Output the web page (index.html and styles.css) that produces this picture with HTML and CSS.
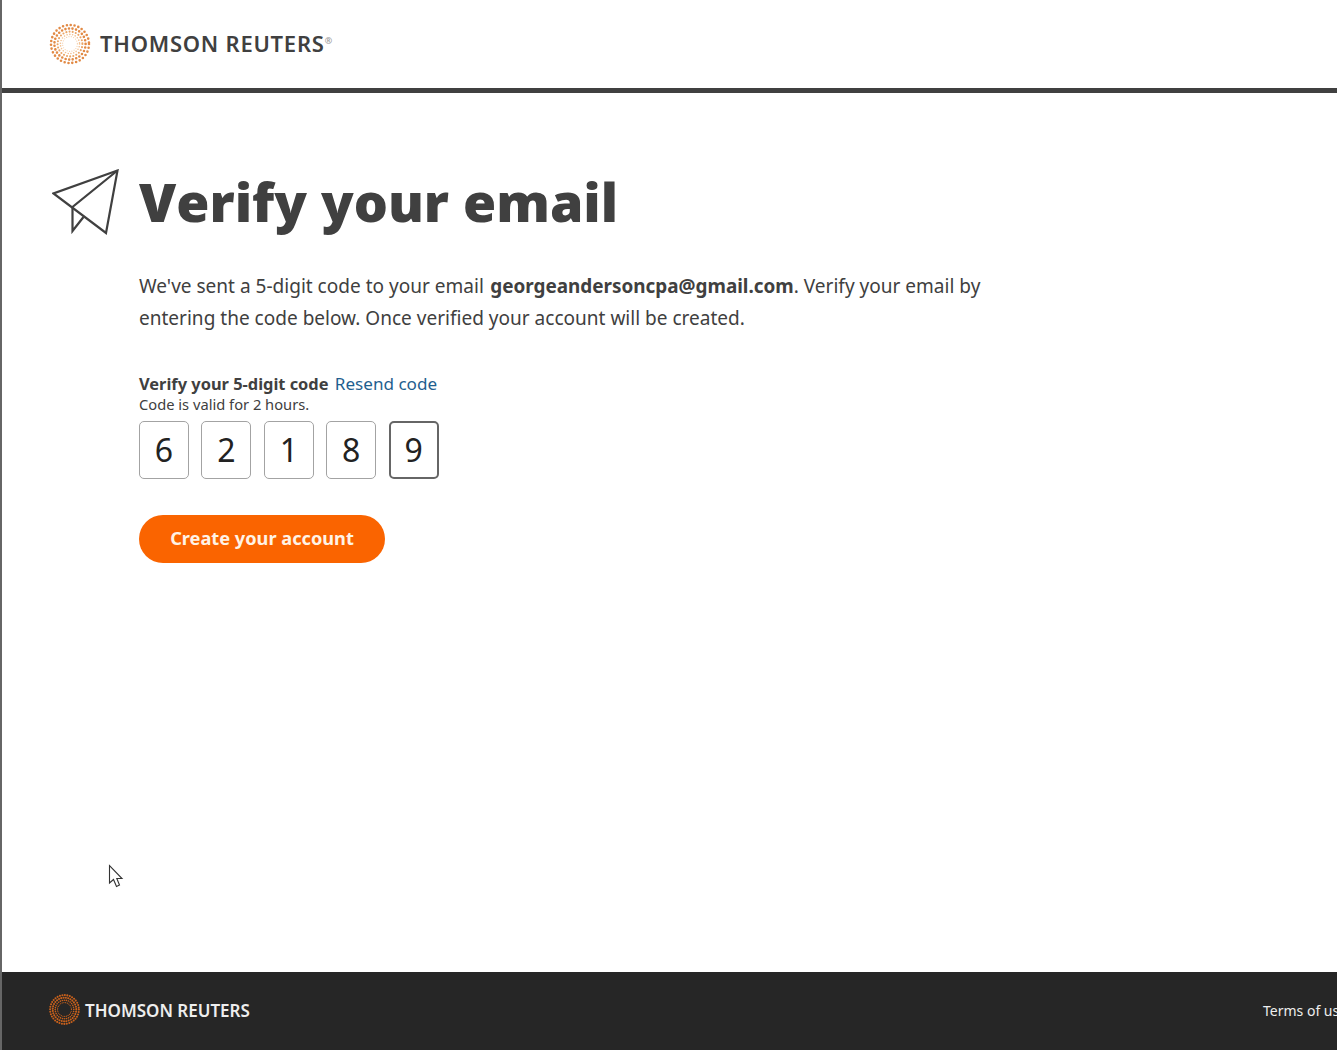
FILE: index.html
```html
<!DOCTYPE html>
<html lang="en">
<head>
    <meta charset="UTF-8">
    <meta name="viewport" content="width=device-width, initial-scale=1.0">
    <title>Verify your email</title>
    <link rel="stylesheet" href="styles.css">
</head>
<body>
    <div class="header">
        <svg class="logo" viewBox="0 0 42 42" fill="none" stroke="#e28a45" stroke-linecap="round">
            <circle cx="21" cy="21" r="19" stroke-width="2.6" stroke-dasharray="0 3.9"/>
            <circle cx="21" cy="21" r="15.6" stroke-width="2.6" stroke-dasharray="0 3.6"/>
            <circle cx="21" cy="21" r="12.4" stroke="#eba566" stroke-width="2.1" stroke-dasharray="0 3.2"/>
            <circle cx="21" cy="21" r="9.6" stroke="#f2c090" stroke-width="1.6" stroke-dasharray="0 2.8"/>
            <circle cx="21" cy="21" r="7.4" stroke="#f5d0ac" stroke-width="1.2" stroke-dasharray="0 2.4"/>
        </svg>
        <span class="brand">THOMSON REUTERS<sup class="reg">®</sup></span>
    </div>

    <div class="content">
        <div class="title-row">
            <svg class="plane" viewBox="0 0 68 66" fill="none" stroke="#404040" stroke-width="2.2" stroke-linejoin="miter">
                <path d="M65.5 1.5 L1.5 24.5 L54 64 Z"/>
                <path d="M65.5 1.5 L20.5 38 V62 L31.5 48"/>
            </svg>
            <h1>Verify your email</h1>
        </div>

        <div class="body-col">
            <p class="intro">We've sent a 5-digit code to your email <b>georgeandersoncpa@gmail.com</b>. Verify your email by entering the code below. Once verified your account will be created.</p>

            <div class="code-label"><b>Verify your 5-digit code</b> <a href="#">Resend code</a></div>
            <div class="code-hint">Code is valid for 2 hours.</div>

            <div class="code-boxes">
                <input class="digit" type="text" value="6">
                <input class="digit" type="text" value="2">
                <input class="digit" type="text" value="1">
                <input class="digit" type="text" value="8">
                <input class="digit active" type="text" value="9">
            </div>

            <button class="submit" type="submit">Create your account</button>
        </div>
    </div>

    <div class="footer">
        <svg class="logo-small" viewBox="0 0 42 42" fill="none" stroke="#c8611c" stroke-linecap="round">
            <circle cx="21" cy="21" r="19.5" stroke-width="2.8" stroke-dasharray="0 3.4"/>
            <circle cx="21" cy="21" r="16" stroke-width="2.8" stroke-dasharray="0 3.2"/>
            <circle cx="21" cy="21" r="12.6" stroke-width="2.2" stroke-dasharray="0 2.8"/>
            <circle cx="21" cy="21" r="9.4" stroke-width="1.6" stroke-dasharray="0 2.4"/>
        </svg>
        <span class="brand-small">THOMSON REUTERS</span>
        <a class="terms" href="#">Terms of use</a>
    </div>

    <svg class="cursor" viewBox="0 0 16 24" fill="#fff" stroke="#333" stroke-width="1.1">
        <path d="M1.5 1.5 V19 L5.5 15.5 L8.5 22.5 L11.5 21 L8.8 14.5 H14 Z"/>
    </svg>
</body>
</html>
```

FILE: styles.css
```css
html, body {
    height: 100%;
}

body {
    font-family: "Noto Sans", Arial, sans-serif;
    color: #404040;
    background-color: #fff;
    margin: 0;
    height: 1050px;
    overflow: hidden;
    display: flex;
    flex-direction: column;
    position: relative;
    border-left: 2px solid #666;
    box-sizing: border-box;
}

.header {
    height: 88px;
    flex-shrink: 0;
    border-bottom: 5px solid #404040;
    display: flex;
    align-items: center;
    padding-left: 47px;
}

.logo {
    width: 42px;
    height: 42px;
    margin-right: 9px;
    filter: blur(0.4px);
}

.brand {
    font-size: 22px;
    font-weight: 600;
    letter-spacing: 0.75px;
    color: #404040;
    white-space: nowrap;
    margin-top: -2px;
}

.reg {
    font-size: 9px;
    color: #999;
    vertical-align: 8px;
    line-height: 0;
}

.content {
    flex: 1;
    padding: 72px 0 0 50px;
}

.title-row {
    display: flex;
    align-items: center;
    height: 72px;
}

.plane {
    width: 68px;
    height: 66px;
    margin-right: 19px;
    position: relative;
    top: 1px;
}

h1 {
    margin: 0;
    font-family: "Open Sans", Arial, sans-serif;
    font-size: 53.7px;
    font-weight: 800;
    color: #404040;
    white-space: nowrap;
}

.body-col {
    margin-left: 87px;
    width: 860px;
}

.intro {
    font-size: 19.05px;
    line-height: 32px;
    margin: 33px 0 0;
}

.intro b {
    font-size: 18.9px;
    font-weight: 700;
    margin-left: 1.5px;
}

.code-label {
    font-size: 16.4px;
    margin-top: 39px;
    line-height: 22px;
}

.code-label b {
    font-weight: 700;
}

.code-label a {
    font-size: 17.1px;
    color: #1f5f8f;
    text-decoration: none;
    margin-left: 2px;
}

.code-hint {
    font-size: 14.7px;
    line-height: 19px;
}

.code-boxes {
    display: flex;
    gap: 12.4px;
    margin-top: 7px;
}

.digit {
    width: 50px;
    height: 58px;
    box-sizing: border-box;
    border: 1px solid #a3a3a3;
    border-radius: 5px;
    background: #fff;
    text-align: center;
    font-family: "Noto Sans", Arial, sans-serif;
    font-size: 32px;
    color: #222;
    padding: 0 0 2px;
}

.digit.active {
    border: 2px solid #666;
}

.submit {
    display: block;
    margin-top: 36px;
    width: 246px;
    height: 48px;
    border: none;
    border-radius: 24px;
    background-color: #fa6400;
    color: #fff3e6;
    font-family: "Noto Sans", Arial, sans-serif;
    font-size: 18.2px;
    font-weight: 700;
    padding: 0 0 2px;
    cursor: pointer;
}

.footer {
    height: 78px;
    flex-shrink: 0;
    background-color: #262626;
    display: flex;
    align-items: center;
    padding: 0 0 3px 47px;
    overflow: hidden;
    box-sizing: border-box;
}

.logo-small {
    width: 31px;
    height: 31px;
    margin-right: 5px;
}

.brand-small {
    font-size: 17px;
    font-weight: 600;
    color: #eee;
    white-space: nowrap;
    margin-top: 1px;
}

.terms {
    margin-left: auto;
    margin-right: -46px;
    margin-top: 2px;
    flex-shrink: 0;
    width: 120px;
    font-size: 14px;
    color: #eee;
    text-decoration: none;
    white-space: nowrap;
}

.cursor {
    position: absolute;
    left: 106px;
    top: 864px;
    width: 16px;
    height: 24px;
}
```
